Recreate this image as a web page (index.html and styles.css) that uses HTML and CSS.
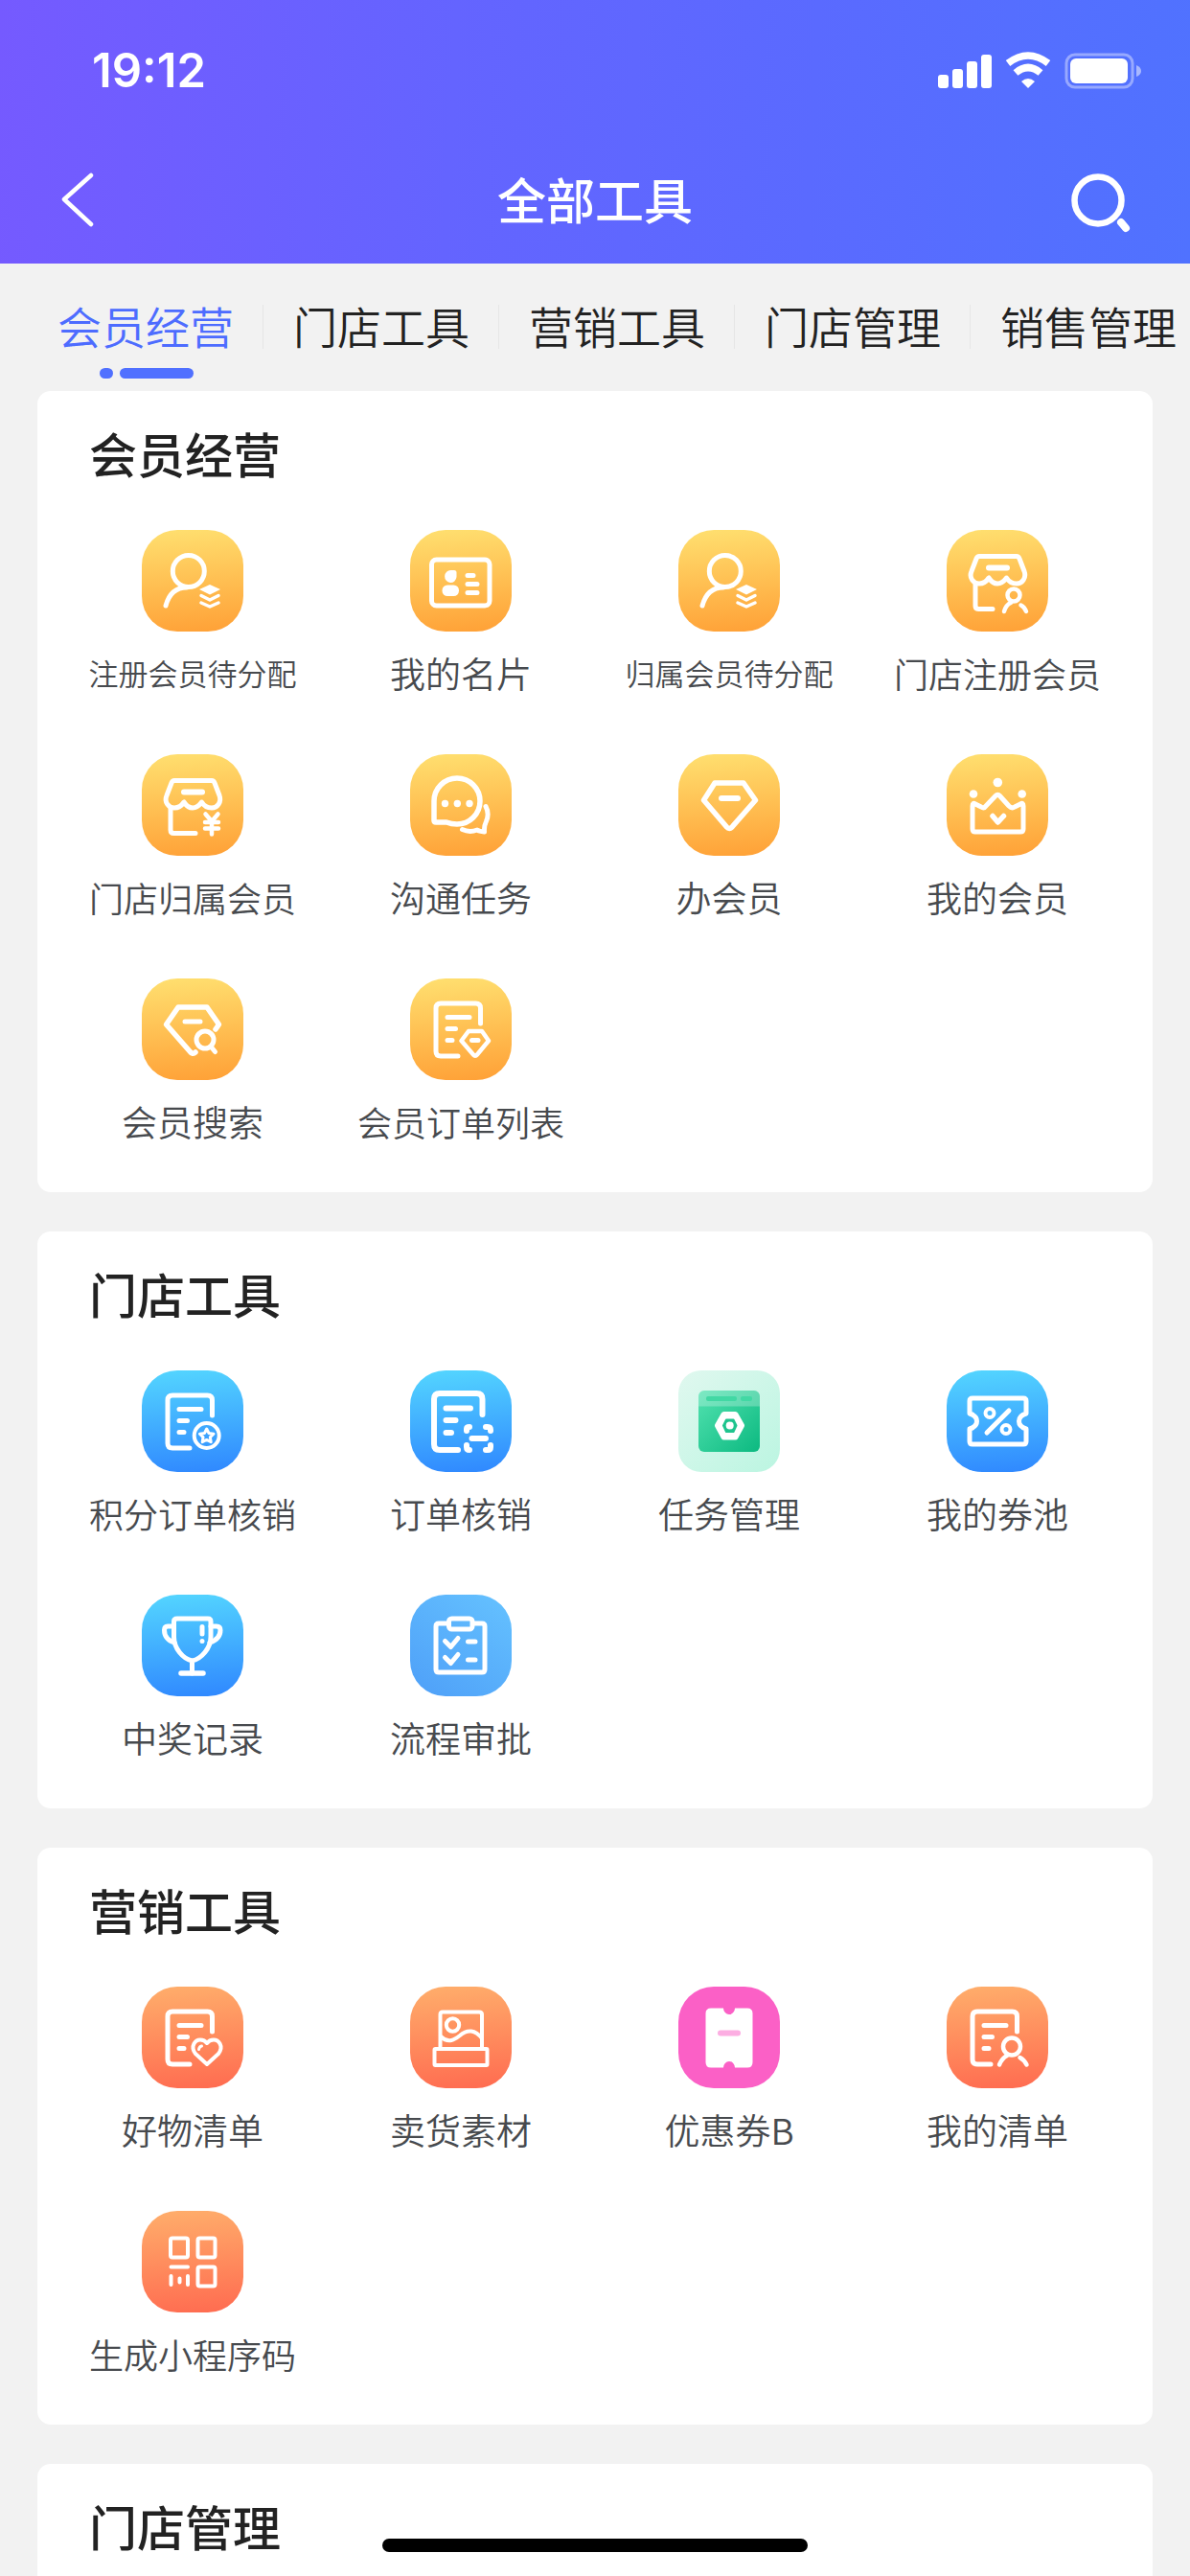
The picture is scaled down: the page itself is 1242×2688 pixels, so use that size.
FILE: index.html
```html
<!DOCTYPE html>
<html lang="zh-CN">
<head>
  <meta charset="UTF-8">
  <meta name="viewport" content="width=device-width, initial-scale=1.0">
  <title>全部工具</title>
  <link rel="stylesheet" href="styles.css">
</head>
<body>

  <!-- shapes shared by several icons -->
  <svg class="defs" width="0" height="0" aria-hidden="true">
    <symbol id="awning" viewBox="0 0 106 106">
      <path d="M34 27.5H73Q75 27.5 76 30L81 43C83.500 50 79 56 73 56Q66 56 62.500 50Q58 56 53 56Q48 56 44 50Q40 56 34 56C28 56 23 50 26 43L31 30Q32 27.500 34 27.500Z"/>
      <path d="M44 39.500H63" stroke-width="6"/>
    </symbol>
    <symbol id="userStack" viewBox="0 0 106 106">
      <circle cx="48.800" cy="43" r="16.500"/>
      <path d="M25 79C28 68 35 60 47 60"/>
      <path class="solid" d="M71 57L82 62L71 67.500L60 62Z"/>
      <path d="M62 68.500L71 73L80 68.500M62 76L71 80L80 76" stroke-width="3.500"/>
    </symbol>
    <symbol id="sheet" viewBox="0 0 106 106">
      <path d="M73.500 47V31Q73.500 26 68.500 26H32Q27 26 27 31V76Q27 81 32 81H50"/>
      <path d="M39 40.500H62M39 52.500H47.500M39 64.500H44"/>
    </symbol>
  </svg>

  <header class="header">
    <div class="status-bar">
      <span class="time">19:12</span>
      <svg class="status-icons" width="214" height="40" viewBox="0 0 214 40" aria-hidden="true">
        <g fill="#fff">
          <rect x="0" y="24" width="11" height="14" rx="3"/>
          <rect x="15" y="18" width="11" height="20" rx="3"/>
          <rect x="30" y="10" width="11" height="28" rx="3"/>
          <rect x="45" y="3" width="11" height="35" rx="3"/>
          <path d="M94 38L87 31Q94 25 101 31Z"/>
        </g>
        <path d="M73 12Q94 -4 115 12" fill="none" stroke="#fff" stroke-width="7.500"/>
        <path d="M81 22Q94 11 107 22" fill="none" stroke="#fff" stroke-width="7.500"/>
        <rect x="134" y="3" width="69" height="34" rx="9" fill="none" stroke="#fff" stroke-opacity=".4" stroke-width="3"/>
        <rect x="138" y="7" width="60" height="26" rx="6" fill="#fff"/>
        <path d="M207 14Q212 16 212 20Q212 24 207 26Z" fill="#fff" fill-opacity=".5"/>
      </svg>
    </div>
    <div class="nav-bar">
      <button class="nav-btn" type="button" aria-label="返回">
        <svg width="64" height="64" viewBox="0 0 64 64"><path d="M35 3L7 28L35 54" stroke-width="4.500"/></svg>
      </button>
      <h1>全部工具</h1>
      <button class="nav-btn" type="button" aria-label="搜索">
        <svg width="64" height="64" viewBox="0 0 64 64"><circle cx="28" cy="29" r="24.500" stroke-width="6.500"/><path d="M52 52L57 58" stroke-width="8"/></svg>
      </button>
    </div>
  </header>

  <nav class="tabs">
    <a class="tab active" href="#member">会员经营</a>
    <a class="tab" href="#store">门店工具</a>
    <a class="tab" href="#marketing">营销工具</a>
    <a class="tab" href="#manage">门店管理</a>
    <a class="tab" href="#sales">销售管理</a>
  </nav>

  <main class="content">

    <section class="card" id="member">
      <h2>会员经营</h2>
      <div class="grid">
        <a class="tool" href="#">
          <svg class="icon yellow" viewBox="0 0 106 106"><use href="#userStack"/></svg>
          <span class="label seven">注册会员待分配</span>
        </a>
        <a class="tool" href="#">
          <svg class="icon yellow" viewBox="0 0 106 106">
            <rect x="22.500" y="31" width="60.500" height="48" rx="5"/>
            <path class="solid" d="M42.500 42H46Q48.500 42 48.500 44.500V49A6.200 6.500 0 1 1 42.500 42Z"/>
            <rect class="solid" x="33.500" y="57.500" width="17.500" height="11.500" rx="5.500"/>
            <path d="M60 47.500H66M60 56.500H70M60 65.500H70"/>
          </svg>
          <span class="label">我的名片</span>
        </a>
        <a class="tool" href="#">
          <svg class="icon yellow" viewBox="0 0 106 106"><use href="#userStack"/></svg>
          <span class="label seven">归属会员待分配</span>
        </a>
        <a class="tool" href="#">
          <svg class="icon yellow" viewBox="0 0 106 106">
            <use href="#awning"/>
            <path d="M30 56V79Q30 82.500 33.500 82.500H48"/>
            <circle cx="70" cy="68" r="6.500" stroke-width="4.500"/>
            <path d="M60 85Q62 78 67 76M77.500 78.500Q81 80 83 85" stroke-width="4.500"/>
          </svg>
          <span class="label six">门店注册会员</span>
        </a>
        <a class="tool" href="#">
          <svg class="icon yellow" viewBox="0 0 106 106">
            <use href="#awning"/>
            <path d="M30 56V79Q30 82.500 33.500 82.500H56"/>
            <path d="M66.500 62.500L73 70L79.500 62.500M73 70V83.500M66 71H80M66 77.500H80" stroke-width="4.500"/>
          </svg>
          <span class="label six">门店归属会员</span>
        </a>
        <a class="tool" href="#">
          <svg class="icon yellow" viewBox="0 0 106 106">
            <path d="M25 49A24 24 0 1 1 49 73Q43 73 38 71H27Q25 71 25 69Z" stroke-width="5.500"/>
            <g class="solid"><circle cx="36.500" cy="51.500" r="3.700"/><circle cx="49.300" cy="51.500" r="3.700"/><circle cx="62" cy="51.500" r="3.700"/></g>
            <path d="M79 54.500Q83 62 79.500 70Q77 75 77.500 81Q72 80.500 70 79Q62 82 54.500 78.500"/>
          </svg>
          <span class="label">沟通任务</span>
        </a>
        <a class="tool" href="#">
          <svg class="icon yellow" viewBox="0 0 106 106">
            <path d="M38 30H68L80.500 48L56 76Q53 79 50.500 76L26.500 48Z" stroke-width="5.500"/>
            <path d="M45 46H62" stroke-width="6"/>
          </svg>
          <span class="label">办会员</span>
        </a>
        <a class="tool" href="#">
          <svg class="icon yellow" viewBox="0 0 106 106">
            <path d="M27 54Q27 50 30 52L36 55Q39 57 41 54L51 43.500Q53.300 41 55.500 43.500L65 54Q68 57 71 55L77 52Q80 50 80 54V78Q80 81 77 81H30Q27 81 27 78Z"/>
            <path d="M48 64.500L53.500 71L59.500 64.500" stroke-width="5.500"/>
            <g class="solid"><circle cx="28" cy="41.500" r="4.300"/><circle cx="53.300" cy="29.500" r="4.800"/><circle cx="78.700" cy="41.500" r="4.300"/></g>
          </svg>
          <span class="label">我的会员</span>
        </a>
        <a class="tool" href="#">
          <svg class="icon yellow" viewBox="0 0 106 106">
            <path d="M77 53L80.500 48L68 30H38L25.500 48L50 76Q53 80 56 77" stroke-width="5.500"/>
            <circle cx="66" cy="64" r="9"/>
            <path d="M72 71L76.500 76.500M45 45H61"/>
          </svg>
          <span class="label">会员搜索</span>
        </a>
        <a class="tool" href="#">
          <svg class="icon yellow" viewBox="0 0 106 106">
            <use href="#sheet"/>
            <path d="M61 55H75L82 65L70 79.500Q68 82 66 79.500L53.500 65Z" stroke-width="4.500"/>
            <path d="M64.500 64.500H71"/>
          </svg>
          <span class="label six">会员订单列表</span>
        </a>
      </div>
    </section>

    <section class="card" id="store">
      <h2>门店工具</h2>
      <div class="grid">
        <a class="tool" href="#">
          <svg class="icon blue" viewBox="0 0 106 106">
            <use href="#sheet"/>
            <circle cx="67.700" cy="68" r="13" stroke-width="4"/>
            <path d="M67.700 61L70 65.500L75 66.200L71.400 69.700L72.200 74.800L67.700 72.400L63.200 74.800L64 69.700L60.400 66.200L65.400 65.500Z" stroke-width="3"/>
          </svg>
          <span class="label six">积分订单核销</span>
        </a>
        <a class="tool" href="#">
          <svg class="icon blue" viewBox="0 0 106 106">
            <path d="M75.500 46V30Q75.500 24 69.500 24H31Q25 24 25 30V77Q25 83 31 83H50" stroke-width="6"/>
            <path d="M37.500 39.500H63M37.500 52H47.500M37.500 65H43" stroke-width="6"/>
            <path d="M59 63V61Q59 59 62 59M79 59H81Q84 59 84 62V63M59 78V80Q59 83 62 83M79 83H81Q84 83 84 80V78M64.500 71H79" stroke-width="6"/>
          </svg>
          <span class="label">订单核销</span>
        </a>
        <a class="tool" href="#">
          <svg class="icon mint" viewBox="0 0 106 106">
            <defs>
              <linearGradient id="green" x1="0" y1="0" x2="1" y2="1">
                <stop offset="0" stop-color="#52e2b0"/>
                <stop offset="1" stop-color="#0cb980"/>
              </linearGradient>
            </defs>
            <g stroke="none">
              <rect x="21" y="21" width="64" height="64" rx="6" fill="url(#green)"/>
              <path d="M21 37.500V27Q21 21 27 21H79Q85 21 85 27V37.500Z" fill="#fff" fill-opacity=".25"/>
              <rect x="29" y="27" width="32" height="5" rx="2" fill="#42d8a4"/>
              <rect x="65" y="27" width="12" height="5" rx="2" fill="#42d8a4"/>
            </g>
            <path d="M47.500 46H59.500L66 57.500L59.500 69.500H47.500L41 57.500Z" fill="#fff" stroke-width="6"/>
            <path d="M50 51.500H57.500L60.500 57.500L57.500 64H50L47 57.500Z" fill="#1fc48e" stroke="#1fc48e" stroke-width="2"/>
            <circle class="solid" cx="53.700" cy="57.500" r="4"/>
          </svg>
          <span class="label">任务管理</span>
        </a>
        <a class="tool" href="#">
          <svg class="icon blue" viewBox="0 0 106 106">
            <path d="M27 29H80Q83 29 83 32V45C73 48 73 58 83 61V74Q83 77 80 77H27Q24 77 24 74V61C34 58 34 48 24 45V32Q24 29 27 29Z"/>
            <path d="M65 42L42 65"/>
            <circle cx="45" cy="44.500" r="4.500" stroke-width="4"/>
            <circle cx="62" cy="61.500" r="4.500" stroke-width="4"/>
          </svg>
          <span class="label">我的券池</span>
        </a>
        <a class="tool" href="#">
          <svg class="icon blue" viewBox="0 0 106 106">
            <path d="M37 25H69Q72 25 72 28V44C72 56 62 67 52.500 69C43 67 33.500 56 33.500 44V28Q33.500 25 37 25ZM52.500 69V82"/>
            <path d="M41 82H64" stroke-width="5.500"/>
            <path d="M33 33H27Q23.500 33 23.500 37C23.500 44 28 48 34 50M72 33H78Q82 33 82 37C82 44 77 48 71 50"/>
            <path d="M63 33.500V41M63 48.500V48.600"/>
          </svg>
          <span class="label">中奖记录</span>
        </a>
        <a class="tool" href="#">
          <svg class="icon sky" viewBox="0 0 106 106">
            <path d="M40 30H30Q27 30 27 33V78Q27 81 30 81H75Q78 81 78 78V33Q78 30 75 30H66"/>
            <rect x="40.500" y="25" width="24.500" height="11" rx="3"/>
            <path d="M36.500 48.500L42.500 54.500L50 45.500M36.500 65.500L42.500 71.500L50 62.500M60.500 49H68M60.500 68H68"/>
          </svg>
          <span class="label">流程审批</span>
        </a>
      </div>
    </section>

    <section class="card" id="marketing">
      <h2>营销工具</h2>
      <div class="grid">
        <a class="tool" href="#">
          <svg class="icon orange" viewBox="0 0 106 106">
            <use href="#sheet"/>
            <path d="M68 81L56 70C50 62 56 55.500 61 55.500Q65.500 55.500 68 59Q70.500 55.500 75 55.500C80 55.500 86 62 80 70Z" stroke-width="4"/>
            <path d="M59.500 65.500Q60 62.500 62.500 62" stroke-width="3"/>
          </svg>
          <span class="label">好物清单</span>
        </a>
        <a class="tool" href="#">
          <svg class="icon orange thin" viewBox="0 0 106 106">
            <path d="M31.500 64V29Q31.500 26.500 34 26.500H72Q75 26.500 75 29V64"/>
            <rect x="25.500" y="65" width="55" height="17" rx="1"/>
            <circle cx="44.500" cy="40" r="6.700"/>
            <path d="M32 52C40 60 47 55 52 51C60 44 68 45 75 54"/>
          </svg>
          <span class="label">卖货素材</span>
        </a>
        <a class="tool" href="#">
          <svg class="icon pink" viewBox="0 0 106 106">
            <path class="solid" d="M34 22.500H47A6 6.500 0 0 0 59 22.500H72Q77.500 22.500 77.500 28V79Q77.500 84.500 72 84.500H59A6 6.500 0 0 0 47 84.500H34Q28.500 84.500 28.500 79V28Q28.500 22.500 34 22.500Z"/>
            <path d="M44 48.500H62" stroke="#fcaee2" stroke-width="6"/>
          </svg>
          <span class="label">优惠券B</span>
        </a>
        <a class="tool" href="#">
          <svg class="icon orange" viewBox="0 0 106 106">
            <path d="M73.500 47V31Q73.500 26 68.500 26H32Q27 26 27 31V76Q27 81 32 81H46"/>
            <path d="M39 40.500H62M39 52.500H47.500M39 64.500H44"/>
            <circle cx="68" cy="62.500" r="9" stroke-width="4.500"/>
            <path d="M55 81.500Q58 74.500 63 72M76.500 74Q81 76.500 83.500 81.500" stroke-width="4.500"/>
          </svg>
          <span class="label">我的清单</span>
        </a>
        <a class="tool" href="#">
          <svg class="icon orange thin" viewBox="0 0 106 106">
            <rect x="30" y="28.500" width="18" height="20" rx="2"/>
            <rect x="58.500" y="28.500" width="18" height="20" rx="2"/>
            <rect x="58.500" y="58.500" width="18" height="20" rx="2"/>
            <path d="M30.500 58.500H48M30.500 68V77M39.500 70.500V74.500M48 68V77"/>
          </svg>
          <span class="label six">生成小程序码</span>
        </a>
      </div>
    </section>

    <section class="card" id="manage">
      <h2>门店管理</h2>
    </section>

  </main>

  <div class="home-indicator"></div>

</body>
</html>
```
FILE: styles.css
```css
* {
  box-sizing: border-box;
}
body {
  margin: 0;
  height: 100vh;
  display: flex;
  flex-direction: column;
  overflow: hidden;
  background: #f2f2f2;
  font-family: "Noto Sans CJK SC", "PingFang SC", sans-serif;
  color: #222;
}
a {
  color: inherit;
  text-decoration: none;
}
h1, h2 {
  margin: 0;
  font-weight: 500;
}
.defs {
  position: absolute;
}

/* Header */
.header {
  flex: none;
  color: #fff;
  background: linear-gradient(93deg, #755aff 0%, #6464ff 38%, #5a6aff 68%, #5072ff 100%);
}
.status-bar {
  display: flex;
  justify-content: space-between;
  align-items: center;
  height: 148px;
  padding: 0 49px 0 96px;
}
.time {
  font-family: Inter, sans-serif;
  font-size: 49px;
  font-weight: 600;
  line-height: 60px;
}
.nav-bar {
  display: flex;
  justify-content: space-between;
  align-items: center;
  height: 127px;
  padding: 0 60px;
}
.nav-bar h1 {
  padding-bottom: 10px;
  font-size: 51px;
  line-height: 60px;
}
.nav-btn {
  width: 64px;
  height: 64px;
  padding: 0;
  border: none;
  background: none;
  cursor: pointer;
}
.nav-btn svg {
  display: block;
  fill: none;
  stroke: #fff;
  stroke-linecap: round;
  stroke-linejoin: round;
}

/* Tabs */
.tabs {
  flex: none;
  display: flex;
  height: 133px;
  padding: 43px 0 0 29px;
  overflow: hidden;
}
.tab {
  position: relative;
  flex: none;
  height: 46px;
  padding: 0 30px 0 31px;
  border-right: 1px solid #e6e6e6;
  font-size: 46px;
  font-weight: 350;
  line-height: 42px;
}
.tab:last-child {
  border-right: none;
}
.tab.active {
  color: #4d6cff;
}
.tab.active::before,
.tab.active::after {
  content: "";
  position: absolute;
  top: 66px;
  height: 11px;
  border-radius: 6px;
  background: #5070ff;
}
.tab.active::before {
  left: 75px;
  width: 14px;
}
.tab.active::after {
  left: 96px;
  width: 77px;
}

/* Cards */
.content {
  flex: 1;
  min-height: 0;
  display: flex;
  flex-direction: column;
  gap: 41px;
  padding: 0 39px;
  overflow-y: auto;
  scrollbar-width: none;
}
.card {
  flex: none;
  padding: 34px 22px 49px;
  border-radius: 14px;
  background: #fff;
}
.card h2 {
  margin: 0 0 51px 32px;
  font-size: 50px;
  line-height: 60px;
}
.grid {
  display: grid;
  grid-template-columns: repeat(4, 1fr);
  row-gap: 60px;
}
.tool {
  display: flex;
  flex-direction: column;
  align-items: center;
}
.label {
  margin-top: 18px;
  font-size: 37px;
  font-weight: 350;
  line-height: 50px;
  white-space: nowrap;
  color: #474a4e;
}
/* long names shrink to fit the column */
.label.six {
  font-size: 36px;
}
.label.seven {
  font-size: 31px;
}

/* Icons */
.icon {
  width: 106px;
  height: 106px;
  border-radius: 37px;
  fill: none;
  stroke: #fff;
  stroke-width: 5;
  stroke-linecap: round;
  stroke-linejoin: round;
}
.icon.thin {
  stroke-width: 4;
}
.solid {
  fill: #fff;
  stroke: none;
}
.yellow {
  background: linear-gradient(175deg, #ffe070, #ffa036);
}
.blue {
  background: linear-gradient(175deg, #54d6ff, #2f87ff);
}
.sky {
  background: linear-gradient(35deg, #4e9ff8, #65c2ff);
}
.mint {
  border-radius: 24px;
  background: linear-gradient(135deg, #e0f8ef, #bbf5e1);
}
.orange {
  background: linear-gradient(175deg, #ffae6b, #ff6b50);
}
.pink {
  background: #fb60c6;
}

.home-indicator {
  position: fixed;
  bottom: 25px;
  left: 50%;
  width: 444px;
  height: 14px;
  margin-left: -222px;
  border-radius: 7px;
  background: #000;
}
```
